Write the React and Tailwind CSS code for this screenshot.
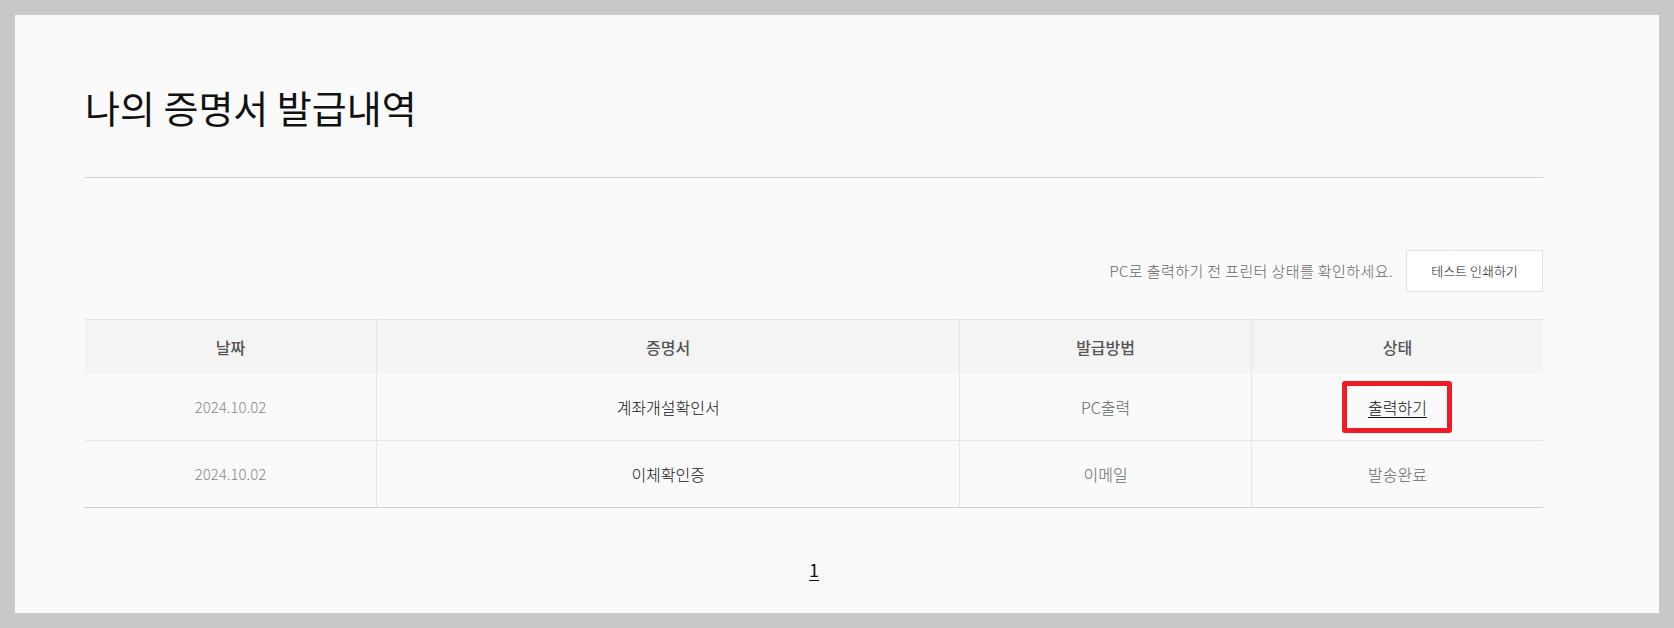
export default function App() {
  const rows = [
    { date: "2024.10.02", name: "계좌개설확인서", method: "PC출력", status: "link" },
    { date: "2024.10.02", name: "이체확인증", method: "이메일", status: "발송완료" },
  ];
  return (
    <div className="h-[628px] w-[1674px] bg-[#c8c8c8] p-[15px] font-['Noto_Sans_CJK_KR','Noto_Sans',sans-serif]">
      <div className="h-full bg-[#fafafa] pl-[70px] pt-[73px]">
        <div className="w-[1458px]">
          <h1 className="border-b border-[#d2d2d2] pb-[51px] text-[38px] leading-[38px] font-normal text-[#111]">
            나의 증명서 발급내역
          </h1>
          <div className="mt-[72px] flex items-center justify-end gap-[13px]">
            <span className="text-[15px] font-light tracking-[0.4px] text-[#666]">
              PC로 출력하기 전 프린터 상태를 확인하세요.
            </span>
            <button className="flex h-[42px] w-[137px] items-center justify-center border border-[#e1e1e1] bg-white text-[13px] font-light text-[#111]">
              테스트 인쇄하기
            </button>
          </div>
          <table className="mt-[27px] w-full table-fixed border-collapse border-t border-[#e3e3e3]">
            <colgroup>
              <col className="w-[20%]" />
              <col className="w-[40%]" />
              <col className="w-[20%]" />
              <col className="w-[20%]" />
            </colgroup>
            <thead>
              <tr className="bg-[#f4f4f4]">
                <th className="h-[54px] p-0 text-[16px] font-medium text-[#555]">날짜</th>
                <th className="h-[54px] border-l border-[#e6e6e6] p-0 text-[16px] font-medium text-[#555]">증명서</th>
                <th className="h-[54px] border-l border-[#e6e6e6] p-0 text-[16px] font-medium text-[#555]">발급방법</th>
                <th className="h-[54px] border-l border-[#e6e6e6] p-0 text-[16px] font-medium text-[#555]">상태</th>
              </tr>
            </thead>
            <tbody>
              {rows.map((r, i) => {
                const last = i === rows.length - 1;
                const bb = last ? "border-b border-b-[#d0d0d0]" : "border-b border-b-[#e6e6e6]";
                return (
                  <tr key={i}>
                    <td className={`h-[67px] p-0 text-center text-[15px] font-light text-[#888] ${bb}`}>{r.date}</td>
                    <td className={`h-[67px] border-l border-l-[#e6e6e6] p-0 text-center text-[16px] font-light text-[#111] ${bb}`}>{r.name}</td>
                    <td className={`h-[67px] border-l border-l-[#e6e6e6] p-0 text-center text-[16px] font-light text-[#666] ${bb}`}>{r.method}</td>
                    <td className={`h-[67px] border-l border-l-[#e6e6e6] p-0 text-center text-[16px] font-light text-[#666] ${bb}`}>
                      {r.status === "link" ? (
                        <span className="inline-flex h-[52px] w-[110px] items-center justify-center rounded-[3px] border-[5px] border-[#ee1d25] align-middle">
                          <a href="#" className="text-[16px] leading-[22px] text-[#111] underline underline-offset-[3px]">
                            출력하기
                          </a>
                        </span>
                      ) : (
                        r.status
                      )}
                    </td>
                  </tr>
                );
              })}
            </tbody>
          </table>
          <div className="mt-[52px] flex justify-center">
            <a href="#" className="text-[18px] leading-[18px] text-[#111] underline underline-offset-[3px]">
              1
            </a>
          </div>
        </div>
      </div>
    </div>
  );
}
